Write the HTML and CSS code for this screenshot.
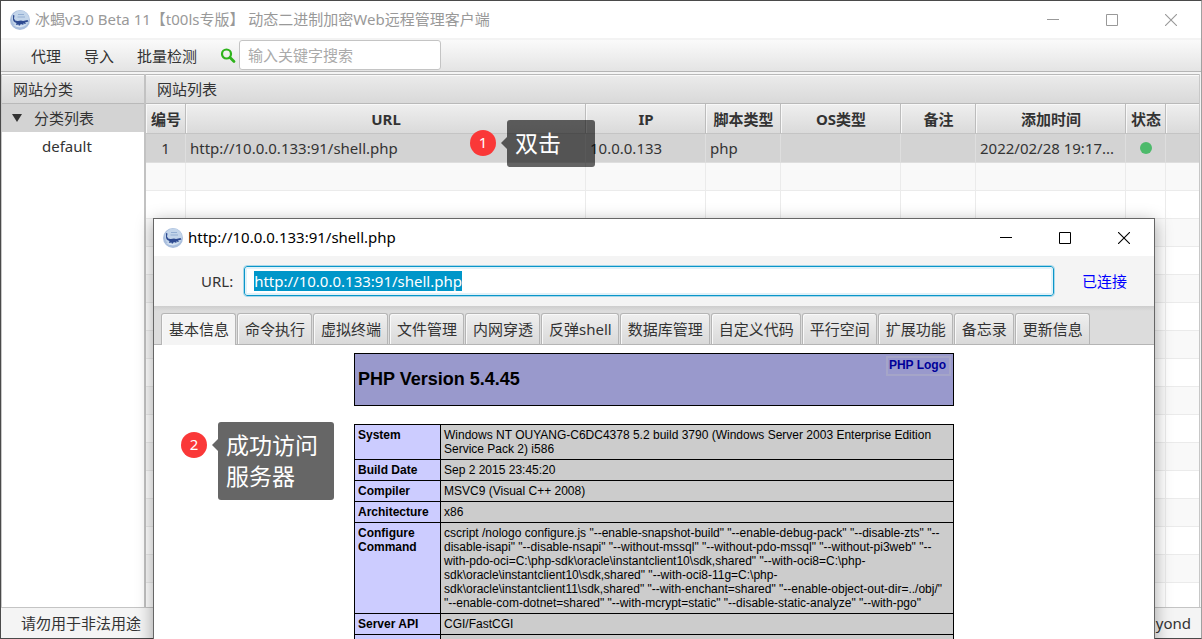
FILE: index.html
```html
<!DOCTYPE html>
<html lang="zh-CN">
<head>
<meta charset="utf-8">
<meta name="viewport" content="width=device-width, initial-scale=1">
<title>冰蝎v3.0 Beta 11</title>
<link rel="stylesheet" href="styles.css">
</head>
<body>
<svg class="defs" aria-hidden="true">
  <symbol id="logo" viewBox="0 0 20 20">
    <circle cx="10" cy="10" r="10" fill="#a9bedd"/>
    <circle cx="10.500" cy="9" r="8.500" fill="#c3d5ea"/>
    <path d="M8 4.500H14M7.500 7H15" stroke="#93aed2" stroke-width="1"/>
    <path d="M3 15Q10 20 17 14Q13 17 3 15" fill="#dbe6f3"/>
    <path d="M3 5L4.500 5.500L4 8.500Q5 11.500 8 11L11 10.500L13 11L17.500 10L18.500 11.500L15 12.500L16 14L13 13.500L13.500 15L11 14L9 16L8.500 14.500L6 15L6.500 13Q2.500 12 3 8Z" fill="#2d4a91"/>
  </symbol>
  <symbol id="minimize" viewBox="0 0 12 12"><path d="M0 5.500H12" fill="none" stroke="currentColor"/></symbol>
  <symbol id="maximize" viewBox="0 0 12 12"><path d="M.5 .5H11.500V11.500H.5Z" fill="none" stroke="currentColor"/></symbol>
  <symbol id="close" viewBox="0 0 12 12"><path d="M0 0L12 12M12 0L0 12" fill="none" stroke="currentColor" stroke-width="1.100"/></symbol>
</svg>

<div class="desktop">
  <main class="window">
    <header class="titlebar titlebar-inactive">
      <svg class="logo"><use href="#logo"/></svg>
      <h1 class="title">冰蝎v3.0 Beta 11【t00ls专版】 动态二进制加密Web远程管理客户端</h1>
      <div class="controls">
        <button aria-label="最小化"><svg><use href="#minimize"/></svg></button>
        <button aria-label="最大化"><svg><use href="#maximize"/></svg></button>
        <button aria-label="关闭"><svg><use href="#close"/></svg></button>
      </div>
    </header>

    <div class="toolbar">
      <button class="menu">代理</button>
      <button class="menu">导入</button>
      <button class="menu">批量检测</button>
      <label class="search-label" for="search" aria-label="搜索">
        <svg class="search-icon" viewBox="0 0 16 16"><circle cx="6.500" cy="6" r="4.500" fill="none" stroke="#2eb31b" stroke-width="2.200"/><path d="M10 9.500L14 13.500" stroke="#2eb31b" stroke-width="2.800" stroke-linecap="round"/></svg>
      </label>
      <input class="search" id="search" type="text" placeholder="输入关键字搜索">
    </div>

    <div class="workspace">
      <section class="pane categories">
        <h2 class="pane-title">网站分类</h2>
        <ul class="tree">
          <li class="tree-row tree-selected"><svg class="arrow" viewBox="0 0 10 8"><path d="M0 0H10L5 8Z" fill="#333"/></svg>分类列表</li>
          <li class="tree-row tree-child">default</li>
        </ul>
      </section>
      <section class="pane sites">
        <h2 class="pane-title">网站列表</h2>
        <table class="grid">
          <colgroup><col class="w40"><col class="w400"><col class="w120"><col class="w75"><col class="w120"><col class="w75"><col class="w150"><col class="w40"><col></colgroup>
          <thead><tr><th>编号</th><th>URL</th><th>IP</th><th>脚本类型</th><th>OS类型</th><th>备注</th><th>添加时间</th><th>状态</th><th></th></tr></thead>
          <tbody>
            <tr class="selected"><td class="center">1</td><td>http://10.0.0.133:91/shell.php</td><td>10.0.0.133</td><td>php</td><td></td><td></td><td>2022/02/28 19:17...</td><td class="center"><span class="status"></span></td><td></td></tr>
            <tr><td></td><td></td><td></td><td></td><td></td><td></td><td></td><td></td><td></td></tr>
            <tr><td></td><td></td><td></td><td></td><td></td><td></td><td></td><td></td><td></td></tr>
            <tr><td></td><td></td><td></td><td></td><td></td><td></td><td></td><td></td><td></td></tr>
            <tr><td></td><td></td><td></td><td></td><td></td><td></td><td></td><td></td><td></td></tr>
            <tr><td></td><td></td><td></td><td></td><td></td><td></td><td></td><td></td><td></td></tr>
            <tr><td></td><td></td><td></td><td></td><td></td><td></td><td></td><td></td><td></td></tr>
            <tr><td></td><td></td><td></td><td></td><td></td><td></td><td></td><td></td><td></td></tr>
            <tr><td></td><td></td><td></td><td></td><td></td><td></td><td></td><td></td><td></td></tr>
            <tr><td></td><td></td><td></td><td></td><td></td><td></td><td></td><td></td><td></td></tr>
            <tr><td></td><td></td><td></td><td></td><td></td><td></td><td></td><td></td><td></td></tr>
            <tr><td></td><td></td><td></td><td></td><td></td><td></td><td></td><td></td><td></td></tr>
            <tr><td></td><td></td><td></td><td></td><td></td><td></td><td></td><td></td><td></td></tr>
            <tr><td></td><td></td><td></td><td></td><td></td><td></td><td></td><td></td><td></td></tr>
            <tr><td></td><td></td><td></td><td></td><td></td><td></td><td></td><td></td><td></td></tr>
            <tr><td></td><td></td><td></td><td></td><td></td><td></td><td></td><td></td><td></td></tr>
            <tr><td></td><td></td><td></td><td></td><td></td><td></td><td></td><td></td><td></td></tr>
          </tbody>
        </table>
      </section>
    </div>

    <footer class="statusbar"><span>请勿用于非法用途</span><span>yond</span></footer>
  </main>

  <section class="dialog" role="dialog" aria-labelledby="dialog-title">
    <header class="titlebar">
      <svg class="logo"><use href="#logo"/></svg>
      <h2 class="title" id="dialog-title">http://10.0.0.133:91/shell.php</h2>
      <div class="controls">
        <button aria-label="最小化"><svg><use href="#minimize"/></svg></button>
        <button aria-label="最大化"><svg><use href="#maximize"/></svg></button>
        <button aria-label="关闭"><svg><use href="#close"/></svg></button>
      </div>
    </header>
    <div class="address">
      <label for="url">URL:</label>
      <input class="url" id="url" type="text" value="http://10.0.0.133:91/shell.php">
      <span class="connected">已连接</span>
    </div>
    <div class="tabs" role="tablist">
      <button class="tab tab-active" role="tab" aria-selected="true">基本信息</button>
      <button class="tab" role="tab">命令执行</button>
      <button class="tab" role="tab">虚拟终端</button>
      <button class="tab" role="tab">文件管理</button>
      <button class="tab" role="tab">内网穿透</button>
      <button class="tab" role="tab">反弹shell</button>
      <button class="tab" role="tab">数据库管理</button>
      <button class="tab" role="tab">自定义代码</button>
      <button class="tab" role="tab">平行空间</button>
      <button class="tab" role="tab">扩展功能</button>
      <button class="tab" role="tab">备忘录</button>
      <button class="tab" role="tab">更新信息</button>
    </div>
    <div class="phpinfo">
      <div class="php-head">
        <h3 class="php-version">PHP Version 5.4.45</h3>
        <a class="php-logo" href="#php">PHP Logo</a>
      </div>
      <table class="php-table">
        <tbody>
          <tr><th scope="row">System</th><td>Windows NT OUYANG-C6DC4378 5.2 build 3790 (Windows Server 2003 Enterprise Edition Service Pack 2) i586</td></tr>
          <tr><th scope="row">Build Date</th><td>Sep 2 2015 23:45:20</td></tr>
          <tr><th scope="row">Compiler</th><td>MSVC9 (Visual C++ 2008)</td></tr>
          <tr><th scope="row">Architecture</th><td>x86</td></tr>
          <tr><th scope="row">Configure Command</th><td>cscript /nologo configure.js "--enable-snapshot-build" "--enable-debug-pack" "--disable-zts" "--<br>disable-isapi" "--disable-nsapi" "--without-mssql" "--without-pdo-mssql" "--without-pi3web" "--<br>with-pdo-oci=C:\php-sdk\oracle\instantclient10\sdk,shared" "--with-oci8=C:\php-<br>sdk\oracle\instantclient10\sdk,shared" "--with-oci8-11g=C:\php-<br>sdk\oracle\instantclient11\sdk,shared" "--with-enchant=shared" "--enable-object-out-dir=../obj/"<br>"--enable-com-dotnet=shared" "--with-mcrypt=static" "--disable-static-analyze" "--with-pgo"</td></tr>
          <tr><th scope="row">Server API</th><td>CGI/FastCGI</td></tr>
          <tr><th></th><td></td></tr>
        </tbody>
      </table>
    </div>
  </section>

  <div class="note note-one"><span class="badge">1</span><p class="bubble">双击</p></div>
  <div class="note note-two"><span class="badge">2</span><p class="bubble">成功访问<br>服务器</p></div>
</div>
<script src="app.js"></script>
</body>
</html>
```
FILE: app.js
```js
const url = document.getElementById("url");
url.focus();
url.select();
```
FILE: styles.css
```css
* { box-sizing: border-box; }
body, h1, h2, h3, p, ul { margin: 0; padding: 0; }
body {
  font: 15px/20px "Noto Sans", "Noto Sans CJK SC", sans-serif;
  color: #333;
}
button, input { font: inherit; color: inherit; }
button { border: 0; background: none; padding: 0; }
.defs { position: absolute; width: 0; height: 0; }

.desktop { position: relative; height: 100vh; overflow: hidden; background: #444; }

/* Main window */
.window {
  display: flex;
  flex-direction: column;
  height: 100%;
  border: 1px solid #4a4a4a;
  border-right-color: #a0a0a0;
  background: #f4f4f4;
}
.titlebar {
  display: flex;
  align-items: center;
  height: 37px;
  flex: none;
  padding: 0 1px 0 9px;
  background: #fff;
  color: #000;
}
.titlebar-inactive { color: #999; }
.logo { width: 20px; height: 20px; margin-right: 5px; }
.title { flex: 1; padding-bottom: 2px; font-size: 15px; font-weight: 400; white-space: nowrap; }
.controls { display: flex; }
.controls button { display: grid; place-items: center; width: 59px; height: 36px; }
.controls svg { width: 12px; height: 12px; }

.toolbar {
  display: flex;
  align-items: center;
  flex: none;
  height: 34px;
  padding-left: 30px;
  border-top: 2px solid #f3f3f3;
  border-bottom: 1px solid #b5b5b5;
  background: linear-gradient(#fafafa, #e4e4e4);
}
.menu { margin-right: 23px; }
.search-label { display: flex; margin-right: 3px; }
.search-icon { width: 16px; height: 16px; }
.search {
  width: 202px;
  height: 30px;
  margin-bottom: 2px;
  padding: 0 8px;
  border: 1px solid #c4c4c4;
  border-radius: 3px;
  background: #fff;
}
.search::placeholder { color: #aaa; }

.workspace { display: flex; flex: 1; min-height: 0; padding: 2px 1px 0 0; }
.pane { overflow: hidden; background: #fff; }
.categories { width: 145px; flex: none; border-left: 1px solid #c8c8c8; border-right: 2px solid #c2c2c2; }
.sites { flex: 1; border-right: 1px solid #c8c8c8; }
.pane-title {
  height: 30px;
  padding: 4px 11px;
  border: 1px solid #b9b9b9;
  border-width: 1px 0;
  box-shadow: inset 0 1px #fafafa;
  background: linear-gradient(#ebebeb, #d9d9d9);
  font-size: 15px;
  font-weight: 400;
}
.tree { list-style: none; }
.tree-row { display: flex; align-items: center; height: 28px; padding-left: 10px; }
.tree-selected { background: #d3d3d3; }
.tree-child { padding-left: 40px; }
.arrow { width: 10px; height: 8px; margin-right: 12px; }

.grid { width: 100%; table-layout: fixed; border-collapse: separate; border-spacing: 0; }
.w40 { width: 40px; }
.w75 { width: 75px; }
.w120 { width: 120px; }
.w150 { width: 150px; }
.w400 { width: 400px; }
.grid th {
  height: 30px;
  padding: 0 0 0 1px;
  border-right: 1px solid #bcbcbc;
  border-bottom: 1px solid #c4c4c4;
  box-shadow: inset 1px 1px #f8f8f8;
  background: linear-gradient(#efefef, #dadada);
  font-weight: 700;
  white-space: nowrap;
}
.grid td {
  height: 28px;
  padding: 0 4px;
  border-right: 1px solid #ebebeb;
  border-bottom: 1px solid #ebebeb;
  white-space: nowrap;
}
.grid tr > :last-child { border-right: 0; }
.grid tbody tr:nth-child(even) { background: #f9f9f9; }
.grid .selected { background: #d3d3d3; }
.grid .selected td { height: 29px; border-color: #dedede; }
.grid .center { text-align: center; }
.status { display: inline-block; width: 12px; height: 12px; border-radius: 50%; background: #4dba6b; }

.statusbar {
  display: flex;
  justify-content: space-between;
  flex: none;
  height: 31px;
  padding: 5px 10px 5px 20px;
  border-top: 1px solid #c4c4c4;
}

/* Shell window */
.dialog {
  position: absolute;
  inset: 218px 47px -40px 153px;
  display: flex;
  flex-direction: column;
  border: 1px solid #666;
  background: #fff;
  box-shadow: 0 4px 16px rgba(0, 0, 0, .35);
}
.address {
  display: flex;
  align-items: center;
  flex: none;
  height: 50px;
  padding: 0 27px 0 47px;
  background: #f4f4f4;
}
.url {
  flex: 1;
  min-width: 0;
  height: 30px;
  margin: 0 28px 0 11px;
  padding: 0 9px;
  border: 1px solid #0a96c9;
  border-radius: 3px;
  outline: 1px solid #a9d8ea;
  box-shadow: inset 0 0 0 2px #e1f2f9;
  background: #fff;
}
.url::selection { color: #fff; background: #0096c9; }
.connected { color: #00f; }
.tabs {
  display: flex;
  gap: 1px;
  flex: none;
  height: 39px;
  padding: 7px 7px 0;
  border-bottom: 1px solid #b5b5b5;
  background: linear-gradient(#cdcdcd, #dcdcdc 5px);
}
.tab {
  padding: 0 6px 1px 7px;
  border: 1px solid #b5b5b5;
  border-bottom: 0;
  border-radius: 3px 3px 0 0;
  box-shadow: inset 1px 1px #f9f9f9;
  background: linear-gradient(#efefef, #d9d9d9);
  white-space: nowrap;
}
.tab-active { margin-bottom: -1px; padding-bottom: 2px; background: #f4f4f4; }

.phpinfo {
  width: 600px;
  margin: 8px auto 0;
  color: #000;
  font: 12px/14px "Liberation Sans", Arial, sans-serif;
}
.php-head {
  display: flex;
  align-items: center;
  justify-content: space-between;
  height: 53px;
  padding: 2px 2px 2px 3px;
  border: 1px solid #000;
  background: #9999cc;
}
.php-version { padding-bottom: 2px; font-size: 18px; line-height: 22px; }
.php-logo {
  align-self: flex-start;
  height: 20px;
  padding: 0 3px 0 1px;
  border: 2px solid #a5a5c8;
  color: #000099;
  font-weight: 700;
  text-decoration: none;
}
.php-table { width: 100%; margin-top: 18px; border-collapse: collapse; }
.php-table th, .php-table td {
  height: 21px;
  padding: 3px;
  border: 1px solid #000;
  text-align: left;
  vertical-align: top;
}
.php-table th { width: 86px; background: #ccccff; }
.php-table td { background: #ccc; }

/* Numbered notes over the windows */
.note { position: absolute; display: flex; gap: 11px; }
.note-one { left: 470px; top: 120px; }
.note-two { left: 181px; top: 422px; }
.badge {
  width: 26px;
  height: 26px;
  margin-top: 10px;
  border-radius: 50%;
  background: #fa3838;
  color: #fff;
  line-height: 25px;
  text-align: center;
}
.bubble {
  position: relative;
  min-width: 88px;
  padding: 8px 16px 8px 8px;
  border-radius: 3px;
  background: rgba(0, 0, 0, .6);
  color: #fff;
  font-size: 23px;
  line-height: 31px;
}
.bubble::before {
  content: "";
  position: absolute;
  left: -6px;
  top: 17px;
  border: solid transparent;
  border-width: 6px 6px 6px 0;
  border-right-color: rgba(0, 0, 0, .6);
}
```
